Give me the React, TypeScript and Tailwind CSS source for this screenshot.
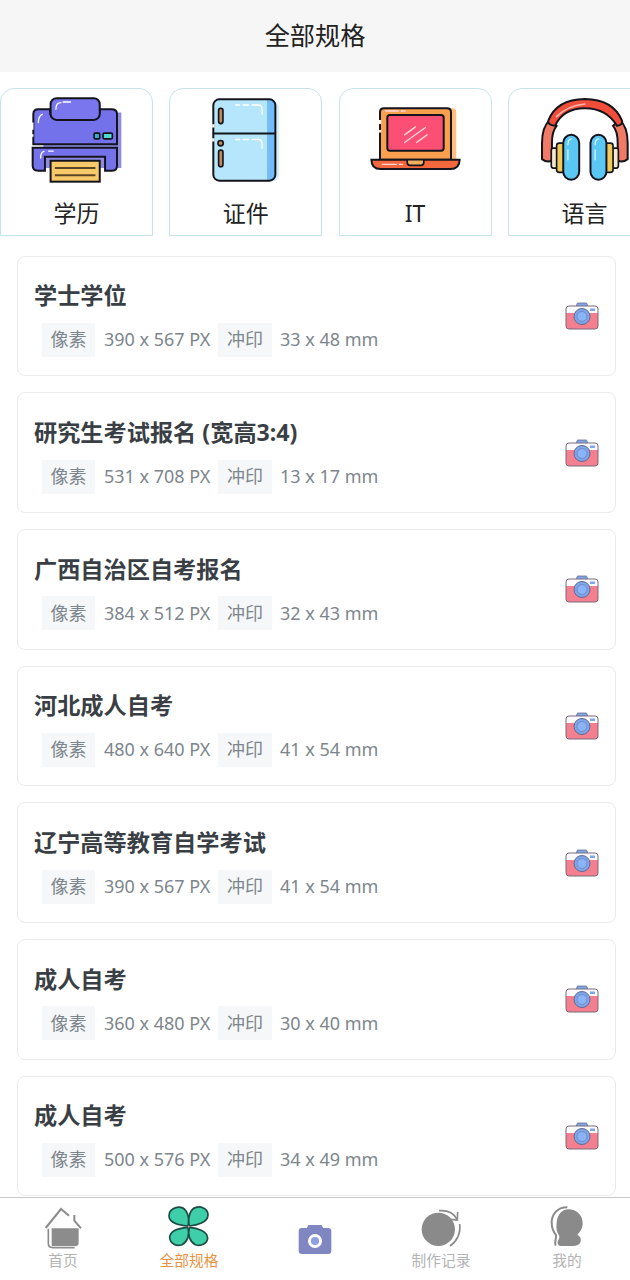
const FONT = "[font-family:'Noto_Sans','Noto_Sans_CJK_SC',sans-serif]";

const specs = [
  { title: "学士学位", px: "390 x 567 PX", mm: "33 x 48 mm" },
  { title: "研究生考试报名 (宽高3:4)", px: "531 x 708 PX", mm: "13 x 17 mm" },
  { title: "广西自治区自考报名", px: "384 x 512 PX", mm: "32 x 43 mm" },
  { title: "河北成人自考", px: "480 x 640 PX", mm: "41 x 54 mm" },
  { title: "辽宁高等教育自学考试", px: "390 x 567 PX", mm: "41 x 54 mm" },
  { title: "成人自考", px: "360 x 480 PX", mm: "30 x 40 mm" },
  { title: "成人自考", px: "500 x 576 PX", mm: "34 x 49 mm" },
];

function Printer() {
  return (
    <svg viewBox="90 45 280 265" width="93" height="88" fill="none">
      <path d="M130 95H365V262H130Z" fill="#8d8be4" />
      <path d="M100 190V100q0-15 15-15h35v5q0 25 25 25h100q25 0 25-25v-5h35q17 0 17 15v90Z" fill="#7472ea" stroke="#14141c" strokeWidth="6" />
      <rect x="152" y="52" width="148" height="65" rx="18" fill="#7976ee" stroke="#14141c" strokeWidth="6" />
      <path d="M98 201H352V255q0 15-15 15H316V228H135V270H115q-17 0-17-15Z" fill="#7472ea" stroke="#14141c" strokeWidth="6" />
      <rect x="152" y="240" width="148" height="63" fill="#f8c968" stroke="#14141c" strokeWidth="6" />
      <path d="M165 262H287M165 284H287" stroke="#5a4526" strokeWidth="6" />
      <rect x="283" y="157" width="17" height="17" rx="3" fill="#2fb3c9" stroke="#14141c" strokeWidth="5" />
      <rect x="310" y="157" width="28" height="17" rx="3" fill="#4fd8d0" stroke="#14141c" strokeWidth="5" />
      <path d="M168 85q0-20 15-20M190 63h22M115 125q0-20 12-25M122 232q0-18 10-20M146 211h14" stroke="#fff" strokeWidth="4" strokeLinecap="round" />
      <path d="M97 125v22M97 160v8" stroke="#fff" strokeWidth="7" />
    </svg>
  );
}

function Fridge() {
  return (
    <svg viewBox="625 45 220 265" width="73" height="88" fill="none">
      <rect x="650" y="62" width="186" height="240" rx="18" fill="#d6effc" />
      <rect x="638" y="55" width="187" height="245" rx="18" fill="#b5e6fb" />
      <path d="M800 55h8q17 0 17 18v209q0 18-17 18H800Z" fill="#72bdf5" />
      <rect x="638" y="55" width="187" height="245" rx="18" stroke="#14141c" strokeWidth="6" />
      <path d="M638 158H825" stroke="#14141c" strokeWidth="6" />
      <rect x="654" y="82" width="13" height="46" rx="6" fill="#c08a5a" stroke="#14141c" strokeWidth="5" />
      <circle cx="660" cy="187" r="8" fill="#c08a5a" stroke="#14141c" strokeWidth="5" />
      <rect x="654" y="208" width="13" height="50" rx="6" fill="#c08a5a" stroke="#14141c" strokeWidth="5" />
      <path d="M705 72h12M728 72h16M755 72h20q10 0 10 15v12M705 176h12M728 176h16M755 176h20q10 0 10 15v12" stroke="#fff" strokeWidth="4" strokeLinecap="round" />
      <path d="M638 130v10M638 172v10" stroke="#fff" strokeWidth="7" />
    </svg>
  );
}

function Laptop() {
  return (
    <svg viewBox="115 75 280 205" width="93" height="68" fill="none">
      <path d="M165 85H366q12 0 12 12V240H165Z" fill="#fdbe80" />
      <path d="M148 240V97q0-12 12-12H350q12 0 12 12V240Z" fill="#f9a04e" stroke="#14141c" strokeWidth="6" />
      <rect x="170" y="105" width="170" height="108" rx="8" fill="#fb4f76" stroke="#14141c" strokeWidth="6" />
      <path d="M122 240H388q0 28-28 28H150q-28 0-28-28Z" fill="#f5683e" stroke="#14141c" strokeWidth="6" />
      <path d="M230 240h50v8q0 9-9 9H239q-9 0-9-9Z" fill="#f0b060" stroke="#14141c" strokeWidth="5" />
      <path d="M222 165 255 141M222 188 285 143M258 188 290 165M155 254h42M206 254h10M165 93h38M212 93h12" stroke="#ffd9e0" strokeWidth="4" strokeLinecap="round" />
      <path d="M148 120v12M148 150v8" stroke="#fff" strokeWidth="7" />
    </svg>
  );
}

function Headphones() {
  return (
    <svg viewBox="625 45 275 265" width="92" height="88" fill="none">
      <path d="M636 238V190q0-50 24-70l20 18q-14 16-14 52v52q-14 8-30-4Z" fill="#ef7b66" stroke="#14141c" strokeWidth="6" />
      <path d="M894 238V190q0-50-24-70l-20 18q14 16 14 52v52q14 8 30-4Z" fill="#ef7b66" stroke="#14141c" strokeWidth="6" />
      <path d="M655 122Q680 58 765 57Q850 58 877 122Q880 135 862 138Q830 85 765 85Q700 85 675 138Q652 135 655 122Z" fill="#f04d3a" stroke="#14141c" strokeWidth="6" />
      <path d="M680 110Q710 78 765 72" stroke="#ffb9ad" strokeWidth="5" strokeLinecap="round" />
      <rect x="664" y="205" width="20" height="60" rx="6" fill="#f5ead0" stroke="#14141c" strokeWidth="5" />
      <rect x="846" y="205" width="20" height="60" rx="6" fill="#f5ead0" stroke="#14141c" strokeWidth="5" />
      <rect x="680" y="190" width="26" height="88" rx="8" fill="#f2ca5c" stroke="#14141c" strokeWidth="5" />
      <rect x="824" y="190" width="26" height="88" rx="8" fill="#f2ca5c" stroke="#14141c" strokeWidth="5" />
      <rect x="700" y="165" width="48" height="135" rx="24" fill="#5bc7f5" stroke="#14141c" strokeWidth="6" />
      <rect x="782" y="165" width="48" height="135" rx="24" fill="#5bc7f5" stroke="#14141c" strokeWidth="6" />
      <path d="M714 195q0-16 10-18M796 195q0-16 10-18M714 210v30M796 210v30" stroke="#d6f3ff" strokeWidth="4" strokeLinecap="round" />
    </svg>
  );
}

const categories = [
  { label: "学历", Icon: Printer, top: "pt-[7px]" },
  { label: "证件", Icon: Fridge, top: "pt-[7px]" },
  { label: "IT", Icon: Laptop, top: "pt-[16px]" },
  { label: "语言", Icon: Headphones, top: "pt-[6px]" },
];

function SmallCamera() {
  return (
    <svg viewBox="0 0 34 28" width="34" height="28" fill="none">
      <path d="M11 4.5 12.5 1h9L23 4.5Z" fill="#7fa6e8" stroke="#6a6f8a" strokeWidth="0.8" />
      <path d="M1 12V7q0-3 3-3h26q3 0 3 3v5Z" fill="#fbfbfd" />
      <path d="M1 11H33V24q0 3-3 3H4q-3 0-3-3Z" fill="#f47f8f" />
      <rect x="1" y="4" width="32" height="23" rx="3" stroke="#7a6a7c" strokeWidth="1" />
      <circle cx="17" cy="14.5" r="8" fill="#7fa6e8" stroke="#5f6a90" strokeWidth="1" />
      <circle cx="17" cy="14.5" r="5" fill="#8ab4f5" stroke="#6a84c0" strokeWidth="0.8" />
      <rect x="25" y="6.5" width="5" height="2.5" fill="#7fa6e8" />
    </svg>
  );
}

function SpecCard({ title, px, mm }: { title: string; px: string; mm: string }) {
  return (
    <div className="flex h-[120.67px] shrink-0 items-center justify-between rounded-lg border border-[#e8eaec] bg-white pl-[16px] pr-[16px]">
      <div className="flex flex-col pt-[5.5px]">
        <div className="text-[23.2px] leading-[30px] font-bold text-[#3a3f45]">{title}</div>
        <div className="mt-[12.5px] flex items-center pl-[8px] text-[18px] text-[#7d868c]">
          <span className="flex h-[34px] w-[53px] items-center justify-center bg-[#f5f7f9]">像素</span>
          <span className="ml-[9px] w-[114px]">{px}</span>
          <span className="flex h-[34px] w-[54px] items-center justify-center bg-[#f5f7f9]">冲印</span>
          <span className="ml-[8px]">{mm}</span>
        </div>
      </div>
      <SmallCamera />
    </div>
  );
}

function TabHome() {
  return (
    <svg viewBox="-6 0 180 156" width="60" height="52" fill="none">
      <path d="M32 84 78 27l24 20M118 45v17l20 23" stroke="#8c8c8c" strokeWidth="6" />
      <path d="M40 86V130q0 13 13 13h66" stroke="#8c8c8c" strokeWidth="5" />
      <path d="M50 85H131V128q0 10-10 10H50Z" fill="#8c8c8c" />
    </svg>
  );
}

function TabClover() {
  return (
    <svg viewBox="-3 0 180 156" width="60" height="52" fill="#3fcfa8" stroke="#1b4d44" strokeWidth="5">
      <path d="M84 78C62 76 28 72 27 48 27 28 48 19 63 22 80 26 90 50 84 78Z" />
      <path d="M88 78C110 76 144 68 144 44 144 26 122 18 108 22 92 26 82 50 88 78Z" />
      <path d="M84 82C62 84 30 90 29 112 30 132 50 140 66 134 82 126 90 105 84 82Z" />
      <path d="M88 82C110 84 142 92 143 114 142 132 122 140 106 134 90 126 82 105 88 82Z" />
      <circle cx="86" cy="80" r="2.5" fill="#f3a6b0" stroke="none" />
    </svg>
  );
}

function TabCamera() {
  return (
    <svg viewBox="890 100 110 95" width="36" height="31" fill="none">
      <path d="M920 112l5-9h40l5 9h15q10 0 10 10v60q0 10-10 10H905q-10 0-10-10v-60q0-10 10-10Z" fill="#7f86c0" />
      <circle cx="945" cy="152" r="17" fill="#8f9fe0" stroke="#fff" strokeWidth="9" />
    </svg>
  );
}

function TabRecord() {
  return (
    <svg viewBox="-12 0 180 156" width="60" height="52" fill="none">
      <circle cx="70" cy="88" r="50" fill="#8a8a8a" />
      <path d="M72 32C100 30 118 42 126 58" stroke="#8a8a8a" strokeWidth="5" />
      <path d="M128 36 127 60 106 58" stroke="#8a8a8a" strokeWidth="5" />
      <path d="M134 72C138 100 125 125 105 138" stroke="#8a8a8a" strokeWidth="5" />
    </svg>
  );
}

function TabMine() {
  return (
    <svg viewBox="-9 0 180 156" width="60" height="52" fill="none">
      <path d="M85 28C110 28 128 45 128 70 128 88 118 98 112 104 120 108 124 116 122 124 120 134 110 138 100 138H65C55 138 50 130 54 122 58 115 60 110 56 104 50 96 48 85 50 68 52 45 65 28 85 28Z" fill="#8a8a8a" />
      <path d="M82 22C50 22 35 45 35 68 35 85 40 95 48 105 50 115 42 125 47 137" stroke="#8a8a8a" strokeWidth="6" />
    </svg>
  );
}

const tabs = [
  { label: "首页", Icon: TabHome, active: false },
  { label: "全部规格", Icon: TabClover, active: true },
  { label: "", Icon: TabCamera, active: false },
  { label: "制作记录", Icon: TabRecord, active: false },
  { label: "我的", Icon: TabMine, active: false },
];

export default function App() {
  return (
    <div className={`flex h-[1280px] w-full flex-col overflow-hidden bg-white ${FONT}`}>
      <header className="flex h-[72px] shrink-0 items-center justify-center bg-[#f6f6f6] text-[25.2px] text-[#222]">
        全部规格
      </header>

      <div className="mt-[16px] flex h-[148px] shrink-0 gap-[16.3px] overflow-hidden">
        {categories.map(({ label, Icon, top }) => (
          <div
            key={label}
            className={`flex h-[148px] w-[153px] shrink-0 flex-col items-center rounded-t-[14px] border border-[#c5e3e6] ${top}`}
          >
            <div className="flex-1">
              <Icon />
            </div>
            <div className="mb-[6px] text-[23px] leading-[32px] text-[#222]">{label}</div>
          </div>
        ))}
      </div>

      <div className="mt-[19.6px] flex min-h-0 flex-1 flex-col gap-[16px] overflow-hidden pl-[17px] pr-[14px]">
        {specs.map((s, i) => (
          <SpecCard key={i} {...s} />
        ))}
      </div>

      <nav className="flex h-[83px] shrink-0 border-t border-[#c9c9c9] bg-white">
        {tabs.map(({ label, Icon, active }, i) =>
          label ? (
            <div key={i} className="flex flex-1 flex-col items-center pt-[2px]">
              <Icon />
              <div className={`-mt-[2px] text-[14.7px] leading-[20px] ${active ? "text-[#e8923f]" : "text-[#b3b3b3]"}`}>{label}</div>
            </div>
          ) : (
            <div key={i} className="flex flex-1 items-center justify-center">
              <Icon />
            </div>
          ),
        )}
      </nav>
    </div>
  );
}
